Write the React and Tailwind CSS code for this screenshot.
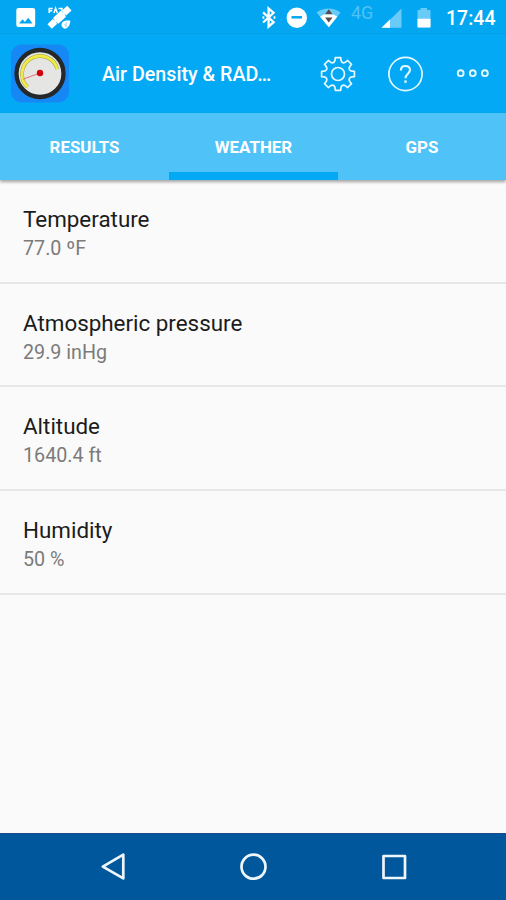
const TEETH = [0, 45, 90, 135, 180, 225, 270, 315];

function rotate(x, y, deg) {
  const a = (deg * Math.PI) / 180;
  return `${(x * Math.cos(a) - y * Math.sin(a)).toFixed(2)} ${(x * Math.sin(a) + y * Math.cos(a)).toFixed(2)}`;
}

const gearPath =
  TEETH.map(
    (d, i) =>
      `${i ? "L" : "M"}${rotate(-4.2, -11.6, d)}Q${rotate(-2.8, -12.4, d)} ${rotate(-2.7, -16.4, d)}L${rotate(2.7, -16.4, d)}Q${rotate(2.8, -12.4, d)} ${rotate(4.2, -11.6, d)}`
  ).join("") + "Z";

function StatusBar() {
  return (
    <div className="flex h-[33px] shrink-0 items-center bg-[#03a6f0] text-white">
      <svg className="ml-4 h-[33px] w-14 shrink-0" viewBox="16 0 56 33" fill="currentColor">
        <path fillRule="evenodd" d="M18.500 8h14.500a2.200 2.200 0 0 1 2.200 2.200v14.600a2.200 2.200 0 0 1-2.200 2.200h-14.500a2.200 2.200 0 0 1-2.200-2.200V10.200a2.200 2.200 0 0 1 2.200-2.200ZM19 23.500h13.500l-4.300-5.700-3.300 4.200-2.400-2.700Z" />
        <g transform="translate(59.500 17.300) rotate(-43)">
          <rect x="-5.500" y="-4" width="11" height="8" rx="1" />
          <path d="M-13.500-3.200h7.400v6.400h-7.400zM6.100-3.200h7.400v6.400H6.100z" />
          <path d="M-6.500-1.500h13v3h-13z" />
        </g>
        <path d="M61.500 25c-.2-3 3-5.200 8.700-4.400.2 4.400-2.200 7.900-5.700 8.200-1.700-.8-2.800-2.200-3-3.800Z" />
        <path d="m64 24 3.500 2.500M66.500 22l-1 5" stroke="#7fd0f8" strokeWidth=".7" />
        <path d="M48.500 8.500h4.200M49.200 8v5M49.200 10.700h3M54 13l1.600-4.700L57.300 13M58.500 8.500h3.500v3" fill="none" stroke="currentColor" strokeWidth="1.500" />
      </svg>
      <svg className="ml-auto h-[33px] w-[90px] shrink-0" viewBox="255.200 0 90 33">
        <path d="m263.300 12.300 10.500 9.900-5 4.500V8.500l5 4.300-10.500 9.700" fill="none" stroke="currentColor" strokeWidth="2.300" />
        <path d="M263.600 16.200v2.500M274.700 16.200v2.500" stroke="currentColor" strokeWidth="1.800" />
        <circle cx="297" cy="17.700" r="10.200" fill="currentColor" />
        <path d="M291.700 17.300h10.500" stroke="#03a6f0" strokeWidth="2.500" />
        <path d="M316.800 12.500c7-5.500 16.800-5.500 24 0L329 27.300Z" fill="#68cbf8" />
        <path d="M320.300 16.700c5-4 12.300-4 17.200 0L329 27.300Z" fill="currentColor" />
        <path d="m329 9.200 3.700 5h-7.400ZM325.300 17.600h7.400l-3.700 5Z" fill="#514e50" />
      </svg>
      <span className="ml-[6px] mb-[7px] w-[26px] whitespace-nowrap text-[18px] leading-none text-[#4fc3f7]">4G</span>
      <svg className="ml-[3px] h-[33px] w-14 shrink-0" viewBox="380 0 56 33">
        <path d="M401.500 8.500v19.200h-20Z" fill="#68cbf8" />
        <path d="M390 19.600v8.100h-8.500Z" fill="currentColor" />
        <path d="M417.500 10h3V8h6.500v2h3.500v17.500h-13Z" fill="#68cbf8" />
        <path d="M417.500 18.800h13v7.700a1 1 0 0 1-1 1h-11a1 1 0 0 1-1-1Z" fill="currentColor" />
      </svg>
      <span className="ml-2.5 mr-[11px] mt-[4px] w-[49px] whitespace-nowrap text-[19.500px] font-medium leading-none">17:44</span>
    </div>
  );
}

function AppBar() {
  return (
    <header className="flex h-20 shrink-0 items-center border-t border-[#039fe6] bg-[#03a9f4] text-white">
      <svg className="ml-2.5 h-[60px] w-[60px] shrink-0" viewBox="0 .5 60 60">
        <rect x="1" y="1" width="58" height="58" rx="11" fill="#1688f5" />
        <circle cx="30" cy="30" r="23.500" fill="#e5e5e3" stroke="#24282a" strokeWidth="4.300" />
        <path d="M17.500 43.500A18 18 0 1 1 47.300 25.500" fill="none" stroke="#a3a340" strokeWidth="3.800" />
        <path d="M17.500 43.500A18 18 0 1 1 47.300 25.500" fill="none" stroke="#f2ea45" strokeWidth="2.800" />
        <path d="M30 29.500 13 35.700" stroke="#e7706e" strokeWidth="1" />
        <circle cx="30" cy="29.500" r="3.200" fill="#d2000c" />
      </svg>
      <h1 className="ml-8 w-[190px] whitespace-nowrap pt-[3px] text-[19.700px] font-medium">Air Density &amp; RAD…</h1>
      <div className="ml-auto mr-4 flex items-center">
        <svg className="h-9 w-9" viewBox="-18 -18 36 36" fill="none" stroke="#e8f8ff" strokeWidth="1.700" strokeLinejoin="round">
          <path d={gearPath} />
          <circle r="6.500" />
        </svg>
        <svg className="ml-[31px] h-9 w-9" viewBox="-18.500 -18 36 36" fill="none" stroke="#e8f8ff">
          <circle r="16.600" strokeWidth="1.700" />
          <path d="M-4.600-3.600C-4.600-6.500-2.700-8-.1-8c2.900 0 4.600 1.500 4.600 4.100C4.500-.5 0 .2 0 4.200" strokeWidth="2.100" />
          <path d="M0 6.400v2.400" strokeWidth="2.400" />
        </svg>
        <svg className="ml-[33px] h-9 w-[34px]" viewBox="-17 -18 34 36" fill="none" stroke="#e8f8ff" strokeWidth="1.900">
          <circle cx="-12.300" cy="-.8" r="2.900" />
          <circle cx="-.2" cy="-.8" r="2.900" />
          <circle cx="11.900" cy="-.8" r="2.900" />
        </svg>
      </div>
    </header>
  );
}

function Tabs() {
  return (
    <nav className="grid h-[67px] shrink-0 grid-cols-[169px_169px_168px] bg-[#4fc3f7] text-[16.900px] font-bold text-white shadow-[0_2px_3px_rgba(0,0,0,0.35)]">
      {["RESULTS", "WEATHER", "GPS"].map((label) => (
        <div key={label} className="flex flex-col items-center">
          <span className="flex h-[59px] items-center pt-[11px]">{label}</span>
          {label === "WEATHER" && <div className="h-2 w-full bg-[#03a9f4]" />}
        </div>
      ))}
    </nav>
  );
}

const readings = [
  ["Temperature", "77.0 ºF"],
  ["Atmospheric pressure", "29.9 inHg"],
  ["Altitude", "1640.4 ft"],
  ["Humidity", "50 %"],
];

export default function App() {
  return (
    <div className="flex h-[900px] w-[506px] flex-col overflow-hidden bg-[#fafafa] font-['Roboto',sans-serif]">
      <StatusBar />
      <AppBar />
      <Tabs />
      <main className="flex-1">
        {readings.map(([name, value]) => (
          <section key={name} className="h-[103.700px] border-b-2 border-[#e7e7e7] px-[23px] pt-[25px]">
            <h2 className="text-[22.400px] leading-[28px] text-[#1c1c1c]">{name}</h2>
            <p className="text-[19.700px] leading-[31px] text-[#7b7b7b]">{value}</p>
          </section>
        ))}
      </main>
      <footer className="flex h-[67px] shrink-0 items-center border-t border-[#1f4b8c] bg-[#01579b]">
        <svg className="h-[66px] w-full" viewBox="0 834 506 66" fill="none" stroke="#eef5fb" strokeWidth="2.700" strokeLinejoin="round">
          <path d="M123.300 854.700v23.700l-20.500-11.700Z" />
          <circle cx="253.500" cy="866.700" r="12" />
          <rect x="383.500" y="856" width="21.500" height="22" />
        </svg>
      </footer>
    </div>
  );
}
